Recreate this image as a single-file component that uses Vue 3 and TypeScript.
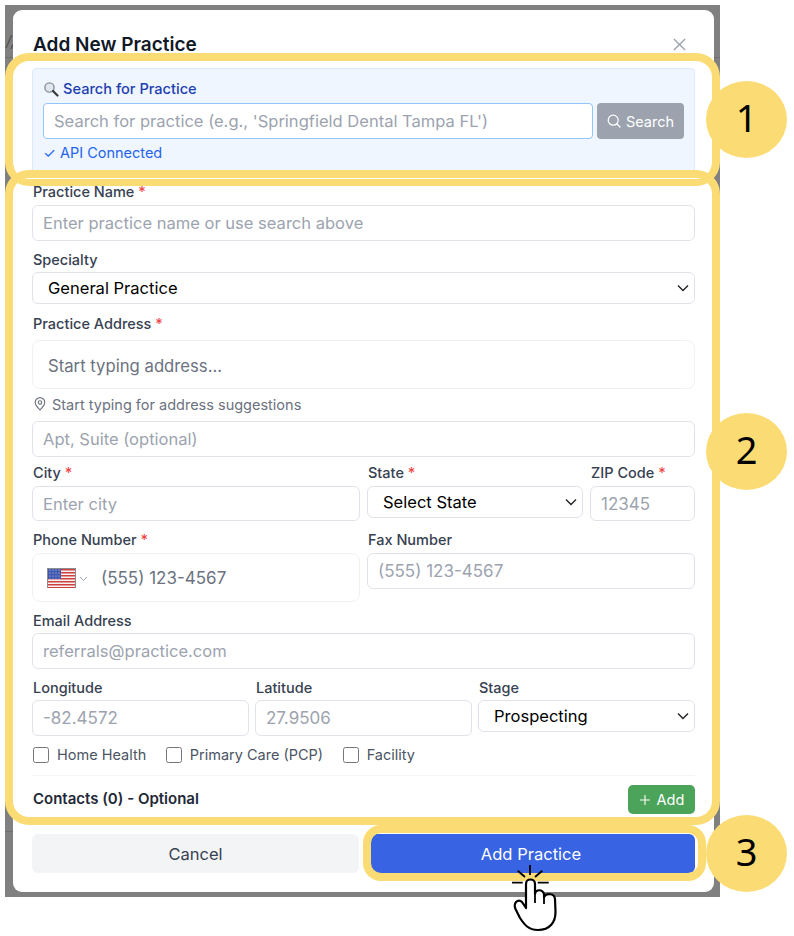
<script setup lang="ts">
const callouts = [
  { n: 1, box: "box-search", badge: "badge-search" },
  { n: 2, box: "box-form", badge: "badge-form" },
  { n: 3, box: "box-submit", badge: "badge-submit" },
];
const stripes = [0, 3, 6, 9, 12, 15, 18];
const stars = [1, 4, 7, 10];
</script>

<template>
  <div class="page">
    <div class="backdrop">
      <span class="behind-text">/,</span>
      <i class="behind-line line-top"></i>
      <i class="behind-line line-bottom"></i>

      <div class="modal">
        <header class="modal-head">
          <h2>Add New Practice</h2>
          <svg class="close" width="13" height="13" viewBox="0 0 14 14">
            <path d="M1 1l12 12M13 1L1 13" />
          </svg>
        </header>

        <section class="search-panel">
          <div class="search-title">
            <svg width="16" height="16" viewBox="0 0 16 16">
              <circle cx="6.5" cy="6.5" r="4.6" fill="#dfe8ef" stroke="#8a9096" stroke-width="1.4" />
              <path d="M10 10l4.500 4.500" stroke="#3a3a3a" stroke-width="2.2" stroke-linecap="round" />
            </svg>
            <span>Search for Practice</span>
          </div>
          <div class="search-row">
            <input class="search-input" placeholder="Search for practice (e.g., 'Springfield Dental Tampa FL')" />
            <button class="search-btn">
              <svg width="14" height="14" viewBox="0 0 14 14" fill="none" stroke="#fff" stroke-width="1.2">
                <circle cx="6.2" cy="6.2" r="5" />
                <path d="M10 10l3 3" stroke-linecap="round" />
              </svg>
              Search
            </button>
          </div>
          <div class="api-status">✓ API Connected</div>
        </section>

        <label class="lbl first">Practice Name <b>*</b></label>
        <input class="inp lbl-gap-3" placeholder="Enter practice name or use search above" />

        <label class="lbl specialty">Specialty</label>
        <div class="sel"><span>General Practice</span><svg class="chev" viewBox="0 0 12 8"><path d="M1 1.500l5 5 5-5" /></svg></div>

        <label class="lbl">Practice Address <b>*</b></label>
        <div class="tall addr-box">Start typing address...</div>
        <div class="hint">
          <svg width="12" height="14" viewBox="0 0 12 14" fill="none" stroke="#6b7280" stroke-width="1.1">
            <path d="M6 13C3.600 10.400 1.200 8 1.200 5.400a4.800 4.800 0 0 1 9.600 0C10.800 8 8.400 10.400 6 13z" />
            <circle cx="6" cy="5.400" r="1.700" />
          </svg>
          Start typing for address suggestions
        </div>
        <input class="inp apt" placeholder="Apt, Suite (optional)" />

        <div class="grid-city">
          <div>
            <label class="lbl row-lbl">City <b>*</b></label>
            <input class="inp short lbl-gap-3" placeholder="Enter city" />
          </div>
          <div>
            <label class="lbl row-lbl">State <b>*</b></label>
            <div class="sel lbl-gap-3"><span>Select State</span><svg class="chev" viewBox="0 0 12 8"><path d="M1 1.500l5 5 5-5" /></svg></div>
          </div>
          <div>
            <label class="lbl row-lbl">ZIP Code <b>*</b></label>
            <input class="inp short num lbl-gap-3" placeholder="12345" />
          </div>
        </div>

        <div class="grid-phone">
          <div>
            <label class="lbl row-lbl">Phone Number <b>*</b></label>
            <div class="tall phone-box lbl-gap-3">
              <svg class="flag" width="29" height="20" viewBox="0 0 29 20">
                <rect width="29" height="20" fill="#8d8d8d" />
                <rect x="1" y="1" width="27" height="18" fill="#f4f2f2" />
                <rect v-for="s in stripes" :key="s" x="1" :y="1 + s" width="27" height="1.5" fill="#d0403f" />
                <rect x="1" y="1" width="13" height="10" fill="#3f57ae" />
                <template v-for="y in stars" :key="y">
                  <circle v-for="x in [3, 6, 9, 12]" :key="x" :cx="x" :cy="y + 1" r="0.6" fill="#dfe4f5" />
                </template>
              </svg>
              <svg class="flag-chev" width="9" height="6" viewBox="0 0 9 6"><path d="M1 1l3.500 3.500L8 1" /></svg>
              <span>(555) 123-4567</span>
            </div>
          </div>
          <div>
            <label class="lbl row-lbl">Fax Number</label>
            <input class="inp num lbl-gap-3" placeholder="(555) 123-4567" />
          </div>
        </div>

        <label class="lbl email-lbl">Email Address</label>
        <input class="inp" placeholder="referrals@practice.com" />

        <div class="grid-geo">
          <div>
            <label class="lbl row-lbl">Longitude</label>
            <input class="inp num" placeholder="-82.4572" />
          </div>
          <div>
            <label class="lbl row-lbl">Latitude</label>
            <input class="inp num" placeholder="27.9506" />
          </div>
          <div>
            <label class="lbl row-lbl">Stage</label>
            <div class="sel"><span>Prospecting</span><svg class="chev" viewBox="0 0 12 8"><path d="M1 1.500l5 5 5-5" /></svg></div>
          </div>
        </div>

        <div class="checks">
          <label><i class="box"></i>Home Health</label>
          <label><i class="box"></i>Primary Care (PCP)</label>
          <label><i class="box"></i>Facility</label>
        </div>

        <div class="contacts">
          <strong>Contacts (0) - Optional</strong>
          <button class="add-btn">
            <svg width="12" height="12" viewBox="0 0 12 12"><path d="M6 1v10M1 6h10" stroke="#fff" stroke-width="1.1" /></svg>
            Add
          </button>
        </div>

        <footer class="modal-foot">
          <button class="cancel">Cancel</button>
          <button class="submit">Add Practice</button>
        </footer>
      </div>
    </div>

    <div v-for="c in callouts" :key="c.n">
      <div class="callout-box" :class="c.box"></div>
      <div class="callout-badge" :class="c.badge">{{ c.n }}</div>
    </div>

    <svg class="hand" width="90" height="86" viewBox="0 0 90 86">
      <path class="rays" d="M40 15v10M27.700 20.700L35 27M52.300 20.700L45 27M22 32.700h10.700M47.700 32.700h11" />
      <path class="palm" d="M36 58V34c0-6 9-6 9 0v10c1-5 7.500-5 9 0v3c2-4 10.500-4 11 2l.5 13c0 10-5.500 18-17.500 18-10 0-14-6-18-12l-4.500-9c-2.500-6 2.500-11 6.500-7z" />
      <path class="rays" d="M45 44v9M54 47v7" />
    </svg>
  </div>
</template>

<style>
html,
body {
  margin: 0;
  background: #fff;
}
</style>

<style scoped>
* {
  box-sizing: border-box;
}

.page {
  position: relative;
  width: 794px;
  height: 936px;
  overflow: hidden;
  font-family: Inter, "Liberation Sans", sans-serif;
  color: #374151;
}

.backdrop {
  position: relative;
  width: 715px;
  height: 892px;
  margin: 5px 0 0 5px;
  padding: 5px 6px 5px 8px;
  background: #808080;
}

.behind-text {
  position: absolute;
  left: 1px;
  top: 26px;
  font-size: 15px;
  font-style: italic;
  color: #4d4d4d;
}

.behind-line {
  position: absolute;
  left: 0;
  right: 0;
  height: 1px;
  background: #6f6f6f;
}

.line-top {
  top: 52px;
}

.line-bottom {
  top: 826px;
}

.modal {
  position: relative;
  height: 882px;
  padding: 0 19px;
  background: #fff;
  border-radius: 9px;
}

.modal-head {
  display: flex;
  align-items: center;
  justify-content: space-between;
  height: 58px;
  padding: 10px 9px 0 1px;
}

h2 {
  margin: 0;
  font-size: 19px;
  font-weight: 600;
  color: #111827;
}

.close path {
  fill: none;
  stroke: #9ca3af;
  stroke-width: 1.5;
}

.search-panel {
  height: 106px;
  padding: 11px 10px 0;
  background: #eff6ff;
  border: 1px solid #dbeafe;
  border-radius: 4px;
}

.search-title {
  display: flex;
  align-items: center;
  gap: 4px;
  height: 17px;
  font-size: 14.6px;
  font-weight: 500;
  color: #1e40af;
}

.search-row {
  display: flex;
  gap: 4px;
  margin-top: 6px;
}

.search-input {
  flex: 1;
  height: 36px;
  padding: 0 10px;
  font: 16.55px Inter, sans-serif;
  background: #fff;
  border: 1px solid #93c5fd;
  border-radius: 4px;
  outline: none;
}

.search-input::placeholder,
.inp::placeholder {
  color: #9ca3af;
  opacity: 1;
}

.search-btn {
  display: flex;
  align-items: center;
  justify-content: center;
  gap: 5px;
  width: 87px;
  height: 36px;
  padding: 0;
  font: 14.5px Inter, sans-serif;
  color: #fff;
  background: #9ca3af;
  border: 0;
  border-radius: 4px;
}

.api-status {
  margin-top: 5px;
  font-size: 14.5px;
  color: #2563eb;
}

.lbl {
  display: block;
  height: 20px;
  margin-top: 10px;
  padding-left: 1px;
  font-size: 14.5px;
  font-weight: 500;
  line-height: 20px;
  color: #374151;
}

.lbl b {
  font-weight: 500;
  color: #ef4444;
}

.lbl.first {
  margin-top: 8px;
}

.lbl.specialty {
  margin-top: 9px;
}

.lbl-gap-3 {
  margin-top: 3px;
}

.lbl.row-lbl {
  margin-top: 0;
}

.inp {
  display: block;
  width: 100%;
  height: 36px;
  padding: 0 10px;
  font: 16.55px Inter, sans-serif;
  color: #111827;
  background: #fff;
  border: 1px solid #e1e3ea;
  border-radius: 6px;
  outline: none;
}

.inp.short {
  height: 35px;
}

.inp.num {
  font-size: 17px;
}

.sel {
  display: flex;
  align-items: center;
  justify-content: space-between;
  height: 32px;
  margin-top: 2px;
  padding: 0 5px 0 15px;
  font-size: 16.55px;
  color: #000;
  background: #fff;
  border: 1px solid #e1e3ea;
  border-radius: 6px;
}

.sel.lbl-gap-3 {
  margin-top: 3px;
}

.chev {
  width: 12px;
  height: 8px;
}

.chev path {
  fill: none;
  stroke: #222;
  stroke-width: 1.4;
}

.tall {
  height: 49px;
  background: #fff;
  border: 1px solid #f0f1f3;
  border-radius: 8px;
  font-size: 16.7px;
  color: #6b7280;
}

.addr-box {
  margin-top: 6px;
  padding: 0 15px;
  line-height: 50px;
}

.hint {
  display: flex;
  align-items: center;
  gap: 6px;
  height: 20px;
  margin-top: 5px;
  padding-left: 2px;
  font-size: 14.5px;
  color: #6b7280;
}

.apt {
  margin-top: 7px;
}

.grid-city,
.grid-phone,
.grid-geo {
  display: grid;
  gap: 7px;
}

.grid-city {
  grid-template-columns: 328px 216px 105px;
  margin-top: 6px;
}

.grid-phone {
  grid-template-columns: 1fr 1fr;
  margin-top: 9px;
}

.phone-box {
  display: flex;
  align-items: center;
  padding-left: 14px;
  font-size: 17px;
}

.flag-chev {
  margin: 2px 13px 0 3px;
}

.flag-chev path {
  fill: none;
  stroke: #9ca3af;
}

.lbl.email-lbl {
  margin-top: 9px;
  margin-bottom: 2px;
}

.grid-geo {
  grid-template-columns: repeat(3, 1fr);
  gap: 6px;
  margin-top: 9px;
}

.grid-geo .inp,
.grid-geo .sel {
  margin-top: 2px;
}

.checks {
  display: flex;
  gap: 19.5px;
  align-items: center;
  height: 31px;
  margin-top: 8px;
  padding: 0 0 10px 1px;
  font-size: 14.5px;
  color: #4b5563;
}

.checks label {
  display: flex;
  align-items: center;
  gap: 8px;
}

.box {
  width: 16px;
  height: 16px;
  background: #fff;
  border: 1px solid #767676;
  border-radius: 2.5px;
}

.contacts {
  display: flex;
  align-items: center;
  justify-content: space-between;
  height: 39px;
  padding: 9px 0 0 1px;
  border-top: 1px solid #f3f4f6;
  font-size: 15px;
  color: #1f2937;
}

.contacts strong {
  margin-top: -2px;
  font-weight: 600;
}

.add-btn {
  display: flex;
  align-items: center;
  justify-content: center;
  gap: 6px;
  width: 67px;
  height: 29px;
  padding: 0;
  font: 14.5px Inter, sans-serif;
  color: #fff;
  background: #4ca35a;
  border: 0;
  border-radius: 5px;
}

.modal-foot {
  display: flex;
  justify-content: space-between;
  margin-top: 20px;
}

.modal-foot button {
  height: 39px;
  font: 16.55px Inter, sans-serif;
  border: 0;
  border-radius: 6px;
}

.cancel {
  width: 327px;
  color: #374151;
  background: #f3f4f6;
}

.submit {
  width: 328px;
  color: #fff;
  background: #3863e3;
}

.callout-box {
  position: absolute;
  left: 5px;
  width: 715px;
  border: 8px solid #fbdc74;
  border-radius: 24px;
}

.box-search {
  top: 53px;
  height: 133px;
  border-bottom-width: 7px;
}

.box-form {
  top: 170px;
  height: 655px;
}

.box-submit {
  top: 825px;
  left: 363px;
  width: 343px;
  height: 56px;
  border-radius: 18px;
}

.callout-badge {
  position: absolute;
  left: 706px;
  width: 81px;
  height: 77px;
  font: 38px/72px "Noto Sans", sans-serif;
  color: #000;
  text-align: center;
  background: #fbdc74;
  border-radius: 50%;
}

.badge-search {
  top: 81px;
}

.badge-form {
  top: 413px;
}

.badge-submit {
  top: 815px;
}

.hand {
  position: absolute;
  left: 490px;
  top: 850px;
}

.rays {
  fill: none;
  stroke: #000;
  stroke-width: 1.8;
}

.palm {
  fill: #fff;
  stroke: #000;
  stroke-width: 2.2;
  stroke-linejoin: round;
}
</style>
